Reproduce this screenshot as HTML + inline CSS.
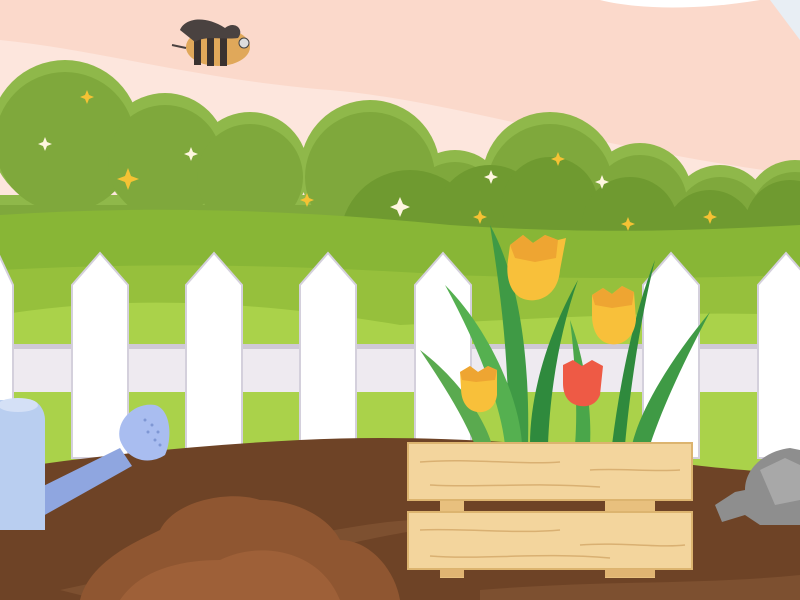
<!DOCTYPE html>
<html><head><style>html,body{margin:0;padding:0;width:800px;height:600px;overflow:hidden}</style></head>
<body>
<svg width="800" height="600" viewBox="0 0 800 600" xmlns="http://www.w3.org/2000/svg">
<rect width="800" height="600" fill="#fbd9cb"/>
<path d="M0 40C100 50 200 80 330 90 450 100 600 150 800 175V260H0Z" fill="#fde6dd"/>
<path d="M600 0C640 10 700 10 760 0Z" fill="#fff"/>
<path d="M770 0L800 40V0Z" fill="#e8eef4"/>
<g fill="#8fb84a">
<circle cx="65" cy="135" r="75"/>
<circle cx="165" cy="155" r="62"/>
<circle cx="250" cy="170" r="58"/>
<circle cx="370" cy="170" r="70"/>
<circle cx="455" cy="200" r="50"/>
<circle cx="550" cy="180" r="68"/>
<circle cx="640" cy="195" r="52"/>
<circle cx="720" cy="215" r="50"/>
<circle cx="795" cy="210" r="50"/>
<rect x="0" y="195" width="800" height="45"/>
</g>
<g fill="#7fa83c">
<circle cx="65" cy="142" r="70"/>
<circle cx="165" cy="162" r="57"/>
<circle cx="250" cy="177" r="53"/>
<circle cx="370" cy="177" r="65"/>
<circle cx="455" cy="207" r="45"/>
<circle cx="550" cy="187" r="63"/>
<circle cx="640" cy="202" r="47"/>
<circle cx="720" cy="222" r="45"/>
<circle cx="795" cy="217" r="45"/>
<rect x="0" y="205" width="800" height="35"/>
</g>
<g fill="#6f9a30">
<circle cx="410" cy="240" r="70"/>
<circle cx="490" cy="220" r="55"/>
<circle cx="550" cy="205" r="48"/>
<circle cx="630" cy="225" r="48"/>
<circle cx="710" cy="235" r="45"/>
<circle cx="790" cy="225" r="45"/>
</g>
<g fill="#f5c234">
<path d="M128 168l3 8 8 3-8 3-3 8-3-8-8-3 8-3z"/>
<path d="M87 90l2 5 5 2-5 2-2 5-2-5-5-2 5-2z"/>
<path d="M307 193l2 5 5 2-5 2-2 5-2-5-5-2 5-2z"/>
<path d="M558 152l2 5 5 2-5 2-2 5-2-5-5-2 5-2z"/>
<path d="M480 210l2 5 5 2-5 2-2 5-2-5-5-2 5-2z"/>
<path d="M628 217l2 5 5 2-5 2-2 5-2-5-5-2 5-2z"/>
<path d="M710 210l2 5 5 2-5 2-2 5-2-5-5-2 5-2z"/>
</g>
<g fill="#fff6e0">
<path d="M45 137l2 5 5 2-5 2-2 5-2-5-5-2 5-2z"/>
<path d="M191 147l2 5 5 2-5 2-2 5-2-5-5-2 5-2z"/>
<path d="M400 197l3 7 7 3-7 3-3 7-3-7-7-3 7-3z"/>
<path d="M491 170l2 5 5 2-5 2-2 5-2-5-5-2 5-2z"/>
<path d="M602 175l2 5 5 2-5 2-2 5-2-5-5-2 5-2z"/>
</g>
<path d="M0 285V215C150 205 300 210 450 225 600 235 700 230 800 225V480H0Z" fill="#88b636"/>
<path d="M0 270C150 262 300 265 450 275 600 280 700 278 800 275V480H0Z" fill="#96c03c"/>
<path d="M0 315C120 295 250 300 400 325 520 320 650 310 800 315V480H0Z" fill="#aad24a"/>
<rect x="0" y="344" width="800" height="48" fill="#eeeaf0"/>
<rect x="0" y="344" width="800" height="5" fill="#cfc9d6"/>
<g fill="#fff" stroke="#d4d0dc" stroke-width="2">
<path d="M-15 458V285L-1 255 13 285V458Z"/>
<path d="M72 458V285L100 253 128 285V458Z"/>
<path d="M186 458V285L214 253 242 285V458Z"/>
<path d="M300 458V285L328 253 356 285V458Z"/>
<path d="M415 458V285L443 253 471 285V458Z"/>
<path d="M643 458V285L671 253 699 285V458Z"/>
<path d="M758 458V285L786 253 814 285V458Z"/>
</g>
<path d="M0 470C100 455 200 445 300 440 400 435 500 440 600 450 700 470 760 470 800 475V600H0Z" fill="#6e4326"/>
<path d="M60 590C200 560 350 520 420 520L420 530C350 540 200 580 100 600Z" fill="#7d5030"/>
<path d="M480 590C600 580 700 585 800 575V600H480Z" fill="#7d5030"/>
<path d="M80 600C90 560 140 540 160 530 175 500 230 490 260 500 300 500 330 520 340 540 370 540 395 570 400 600Z" fill="#8f5631"/>
<path d="M120 600C140 570 180 560 220 560 260 540 320 550 340 600Z" fill="#9e6038"/>
<path d="M5 505L120 448 132 466 18 530Z" fill="#8fa6e0"/>
<path d="M120 440C115 420 135 402 155 405 172 410 172 440 165 455 150 465 128 462 120 440Z" fill="#a9bdf0"/>
<path d="M0 400H30C38 400 45 410 45 420V530H0Z" fill="#b9cef0"/>
<ellipse cx="18" cy="405" rx="20" ry="7" fill="#d4e0f6"/>
<g fill="#7f97d4"><circle cx="145" cy="420" r="1.5"/><circle cx="152" cy="425" r="1.5"/><circle cx="158" cy="432" r="1.5"/><circle cx="148" cy="432" r="1.5"/><circle cx="155" cy="440" r="1.5"/><circle cx="160" cy="445" r="1.5"/></g>
<path d="M745 490C745 465 770 450 790 448L800 450V525H760L745 515 722 522 715 505 735 492Z" fill="#8e8e8e"/>
<path d="M760 470L785 458 800 465V500L775 505Z" fill="#a8a8a8"/>
<g fill="#3f9a45">
<path d="M490 225C520 280 530 360 528 445L508 445C510 360 500 290 490 225Z"/>
<path d="M655 260C640 320 630 390 625 445L612 445C620 380 635 310 655 260Z" fill="#2f8a3d"/>
<path d="M710 312C670 360 640 410 632 445L650 445C665 400 690 350 710 312Z"/>
<path d="M420 350C460 380 485 420 492 445L475 445C460 410 440 380 420 350Z" fill="#5aaa4f"/>
<path d="M445 285C490 330 520 400 522 445L505 445C500 400 475 340 445 285Z" fill="#55b050"/>
<path d="M578 280C550 330 530 390 530 445L548 445C550 390 560 330 578 280Z" fill="#2f8a3d"/>
<path d="M570 320C585 360 592 410 590 445L575 445C578 410 575 360 570 320Z" fill="#4aa64a"/>
</g>
<path d="M510 245L523 235 533 243 545 235 558 240 566 238 560 270C558 295 540 302 528 300 512 298 505 280 508 260Z" fill="#f8c03a"/>
<path d="M510 245L523 235 533 243 545 235 558 240 556 258 535 262 515 258Z" fill="#eea532"/>
<path d="M592 295L603 288 612 294 622 286 634 292 636 320C634 340 620 346 610 344 598 342 592 330 592 315Z" fill="#f8c03a"/>
<path d="M592 295L603 288 612 294 622 286 634 292 632 305 612 308 595 305Z" fill="#eea532"/>
<path d="M460 372L470 366 478 372 488 366 497 370 497 395C495 410 484 413 477 412 466 410 461 400 461 388Z" fill="#f8c03a"/>
<path d="M460 372L470 366 478 372 488 366 497 370 495 380 476 382 462 380Z" fill="#eea532"/>
<path d="M563 365L573 360 582 366 592 360 603 366 600 395C596 405 588 407 580 406 568 404 563 395 563 383Z" fill="#ee5a45"/>
<rect x="440" y="450" width="24" height="128" fill="#e8c07e"/>
<rect x="605" y="450" width="50" height="128" fill="#e8c07e"/>
<rect x="408" y="443" width="284" height="57" fill="#f3d59d" stroke="#dcb46f" stroke-width="2"/>
<rect x="408" y="512" width="284" height="57" fill="#f3d59d" stroke="#dcb46f" stroke-width="2"/>
<rect x="440" y="569" width="24" height="8" fill="#e0b472"/>
<rect x="605" y="569" width="50" height="8" fill="#e0b472"/>
<g stroke="#d9b072" stroke-width="1.5" fill="none">
<path d="M420 462C470 458 520 465 560 462M590 470C620 468 650 472 680 470M430 485C480 488 530 482 600 487M420 530C460 528 520 534 560 530M580 545C620 542 660 548 685 545M430 556C480 560 540 552 610 558"/>
</g>
<ellipse cx="218" cy="47" rx="32" ry="19" fill="#e0a85a"/>
<g fill="#3a3230"><rect x="194" y="30" width="7" height="35"/><rect x="207" y="28" width="7" height="38"/><rect x="220" y="28" width="7" height="38"/></g>
<path d="M180 30C185 18 205 15 225 28 235 20 245 30 238 38 225 40 205 35 195 42Z" fill="#4a4240"/>
<path d="M172 45L186 48" stroke="#4a4240" stroke-width="2"/>
<circle cx="244" cy="43" r="5" fill="#ddd" stroke="#444"/>
</svg>
</body></html>
